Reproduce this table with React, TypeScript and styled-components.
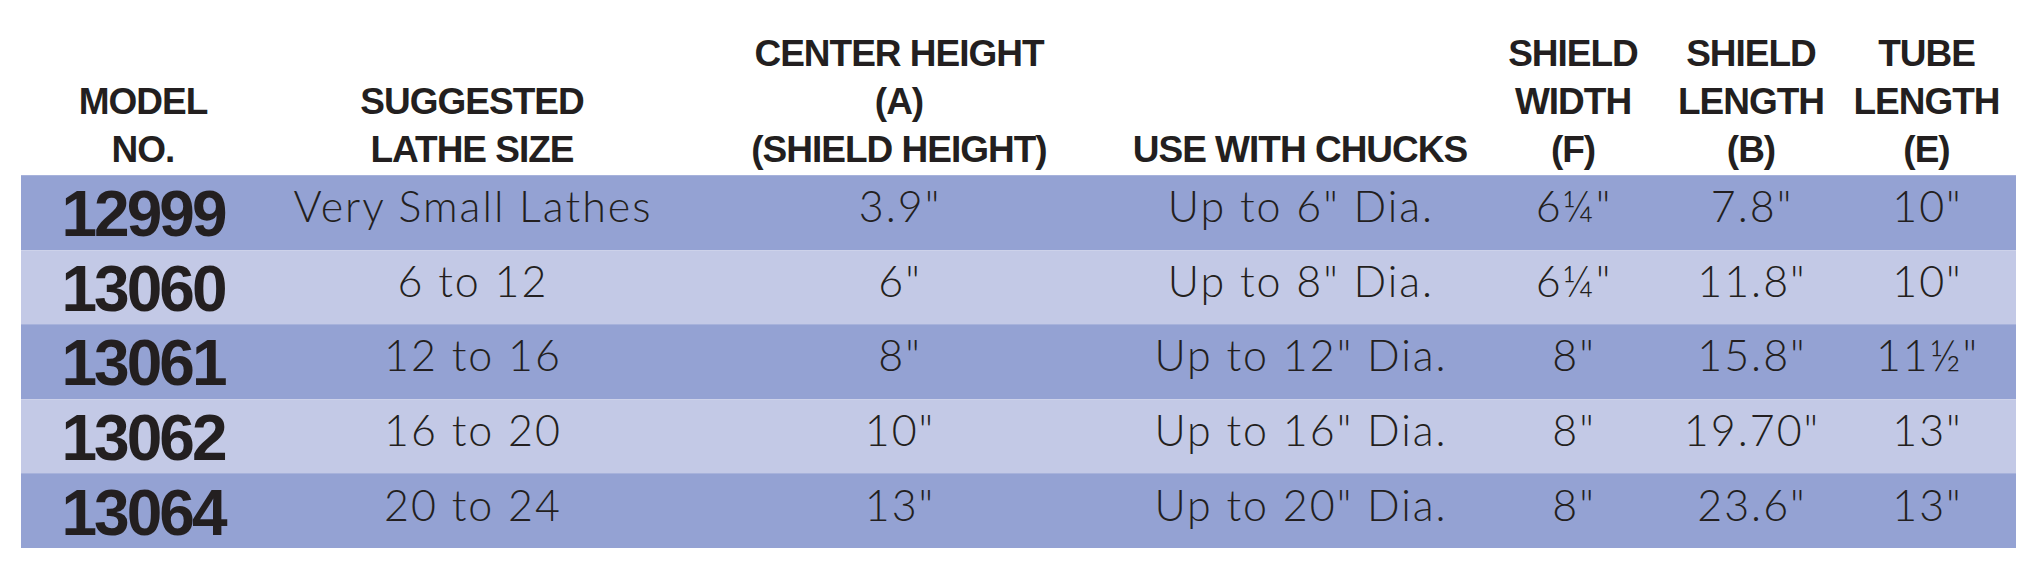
import React from "react";
import styled, { createGlobalStyle, css } from "styled-components";

const GlobalStyle = createGlobalStyle`
  html, body {
    margin: 0;
    padding: 0;
    background: #ffffff;
  }
  body {
    font-family: "Liberation Sans", Arial, sans-serif;
    color: #231f20;
  }
`;

const columns = css`
  display: grid;
  grid-template-columns: 244px 414px 440px 362px 184px 172px 179px;
`;

const Table = styled.div`
  width: 1995px;
  margin-left: 21px;
  display: flex;
  flex-direction: column;
`;

const HeaderRow = styled.div`
  ${columns};
  height: 175px;
  align-items: end;
`;

const HeaderCell = styled.div`
  text-align: center;
  font-family: "Liberation Sans", Arial, sans-serif;
  font-weight: 700;
  font-size: 37px;
  line-height: 48px;
  letter-spacing: -1px;
  color: #231f20;
  white-space: pre-line;
  padding-bottom: 1px;
`;

const Row = styled.div<{ $tone: "dark" | "light" }>`
  ${columns};
  height: 74.6px;
  align-items: center;
  background: ${(p) => (p.$tone === "dark" ? "#94a2d3" : "#c3c9e6")};
  box-shadow: inset 0 1px 0 rgba(255, 255, 255, 0.18);
`;

const ModelCell = styled.div`
  text-align: center;
  font-family: "Liberation Sans", Arial, sans-serif;
  font-weight: 700;
  font-size: 64px;
  letter-spacing: -3px;
  line-height: 1;
  color: #231f20;
  padding-top: 4px;
`;

const DataCell = styled.div`
  text-align: center;
  font-family: Lato, "Open Sans", sans-serif;
  font-weight: 300;
  font-size: 43px;
  letter-spacing: 2px;
  padding-left: 2px;
  line-height: 1;
  color: #231f20;
  padding-bottom: 13px;
`;

const headers = [
  "MODEL\nNO.",
  "SUGGESTED\nLATHE SIZE",
  "CENTER HEIGHT\n(A)\n(SHIELD HEIGHT)",
  "USE WITH CHUCKS",
  "SHIELD\nWIDTH\n(F)",
  "SHIELD\nLENGTH\n(B)",
  "TUBE\nLENGTH\n(E)",
];

const rows: string[][] = [
  ["12999", "Very Small Lathes", '3.9"', 'Up to 6" Dia.', '6¼"', '7.8"', '10"'],
  ["13060", "6 to 12", '6"', 'Up to 8" Dia.', '6¼"', '11.8"', '10"'],
  ["13061", "12 to 16", '8"', 'Up to 12" Dia.', '8"', '15.8"', '11½"'],
  ["13062", "16 to 20", '10"', 'Up to 16" Dia.', '8"', '19.70"', '13"'],
  ["13064", "20 to 24", '13"', 'Up to 20" Dia.', '8"', '23.6"', '13"'],
];

export default function App() {
  return (
    <>
      <GlobalStyle />
      <Table>
        <HeaderRow>
          {headers.map((h) => (
            <HeaderCell key={h}>{h}</HeaderCell>
          ))}
        </HeaderRow>
        {rows.map((r, i) => (
          <Row key={r[0]} $tone={i % 2 === 0 ? "dark" : "light"}>
            <ModelCell>{r[0]}</ModelCell>
            {r.slice(1).map((v, j) => (
              <DataCell key={j}>{v}</DataCell>
            ))}
          </Row>
        ))}
      </Table>
    </>
  );
}
